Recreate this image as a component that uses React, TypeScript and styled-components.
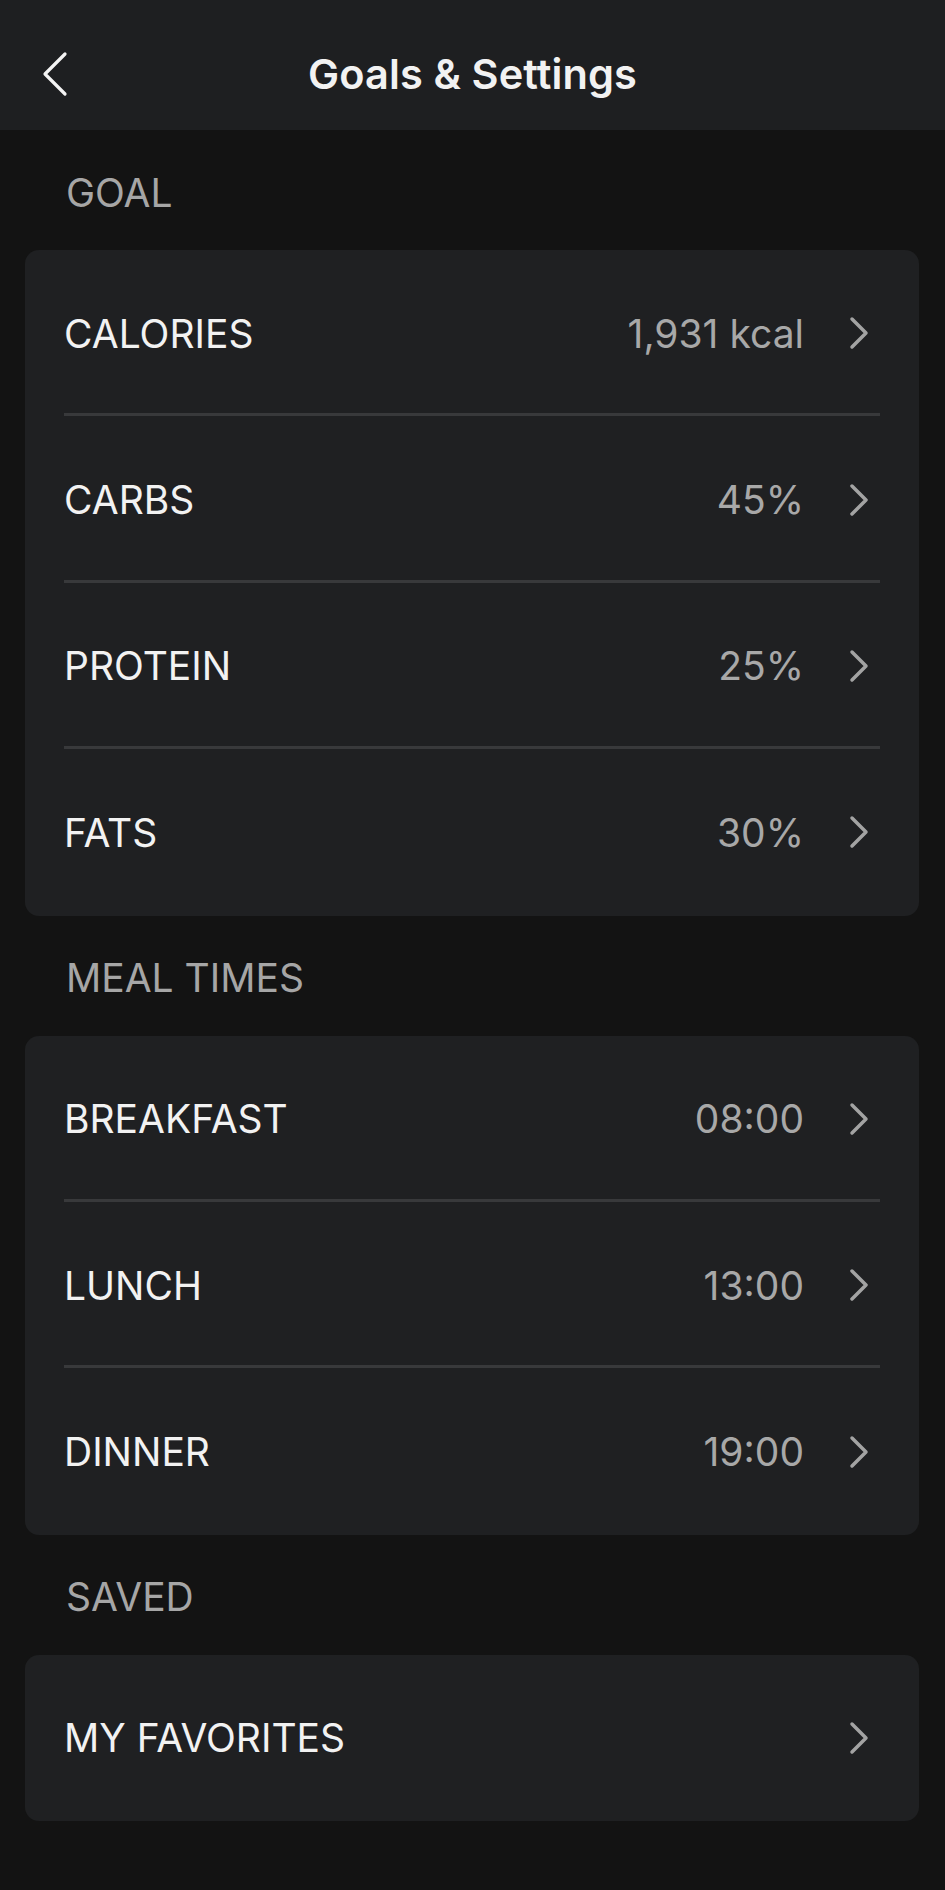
import React from "react";
import styled, { createGlobalStyle } from "styled-components";

const GlobalStyle = createGlobalStyle`
  html, body {
    margin: 0;
    padding: 0;
    background: #131313;
  }
  body {
    font-family: Inter, "Noto Sans", "Liberation Sans", sans-serif;
    -webkit-font-smoothing: antialiased;
  }
  * { box-sizing: border-box; }
`;

const Page = styled.div`
  width: 945px;
  min-height: 1890px;
  background: #131313;
  display: flex;
  flex-direction: column;
`;

const Header = styled.header`
  height: 130px;
  padding-top: 18px;
  background: #1e1f21;
  display: grid;
  grid-template-columns: 1fr auto 1fr;
  align-items: center;
`;

const BackButton = styled.button`
  justify-self: start;
  margin-left: 41px;
  background: none;
  border: none;
  padding: 0;
  display: flex;
  cursor: pointer;
`;

const Title = styled.h1`
  margin: 0;
  font-size: 41.5px;
  font-weight: 600;
  color: #f2f2f2;
  letter-spacing: 0.1px;
`;

const Content = styled.main`
  padding: 0 26px 0 25px;
  display: flex;
  flex-direction: column;
`;

const SectionTitle = styled.div`
  height: 120px;
  display: flex;
  align-items: center;
  padding-left: 41px;
  padding-top: 4px;
  font-size: 39px;
  font-weight: 400;
  color: #a6a6a6;
`;

const Card = styled.section`
  background: #1f2022;
  border-radius: 14px;
  padding: 0 39px 0 39px;
  display: flex;
  flex-direction: column;
`;

const Row = styled.div<{ $last?: boolean }>`
  height: 166.4px;
  display: flex;
  align-items: center;
  border-bottom: ${(p) => (p.$last ? "none" : "3px solid #38393b")};
  padding-top: ${(p) => (p.$last ? "0" : "3px")};
`;

const Label = styled.span`
  flex: 1;
  font-size: 39px;
  font-weight: 400;
  color: #f2f2f2;
`;

const Value = styled.span`
  font-size: 39px;
  font-weight: 400;
  color: #a8a8a8;
  margin-right: 45px;
`;

const ChevronWrap = styled.span`
  display: flex;
  margin-right: 11px;
`;

const Chevron = () => (
  <ChevronWrap>
    <svg width="20" height="34" viewBox="0 0 20 34" fill="none">
      <path
        d="M3 3 L17 17 L3 31"
        stroke="#a3a3a3"
        strokeWidth="3.5"
        strokeLinecap="round"
        strokeLinejoin="round"
      />
    </svg>
  </ChevronWrap>
);

type Item = { label: string; value?: string };

const sections: { title: string; items: Item[] }[] = [
  {
    title: "GOAL",
    items: [
      { label: "CALORIES", value: "1,931 kcal" },
      { label: "CARBS", value: "45%" },
      { label: "PROTEIN", value: "25%" },
      { label: "FATS", value: "30%" },
    ],
  },
  {
    title: "MEAL TIMES",
    items: [
      { label: "BREAKFAST", value: "08:00" },
      { label: "LUNCH", value: "13:00" },
      { label: "DINNER", value: "19:00" },
    ],
  },
  {
    title: "SAVED",
    items: [{ label: "MY FAVORITES" }],
  },
];

export default function App() {
  return (
    <>
      <GlobalStyle />
      <Page>
        <Header>
          <BackButton aria-label="Back">
            <svg width="28" height="46" viewBox="0 0 28 46" fill="none">
              <path
                d="M24 3 L4 23 L24 43"
                stroke="#f4f4f4"
                strokeWidth="3.2"
                strokeLinecap="round"
                strokeLinejoin="round"
              />
            </svg>
          </BackButton>
          <Title>Goals &amp; Settings</Title>
          <div />
        </Header>
        <Content>
          {sections.map((s) => (
            <React.Fragment key={s.title}>
              <SectionTitle>{s.title}</SectionTitle>
              <Card>
                {s.items.map((it, i) => (
                  <Row key={it.label} $last={i === s.items.length - 1}>
                    <Label>{it.label}</Label>
                    {it.value && <Value>{it.value}</Value>}
                    <Chevron />
                  </Row>
                ))}
              </Card>
            </React.Fragment>
          ))}
        </Content>
      </Page>
    </>
  );
}
